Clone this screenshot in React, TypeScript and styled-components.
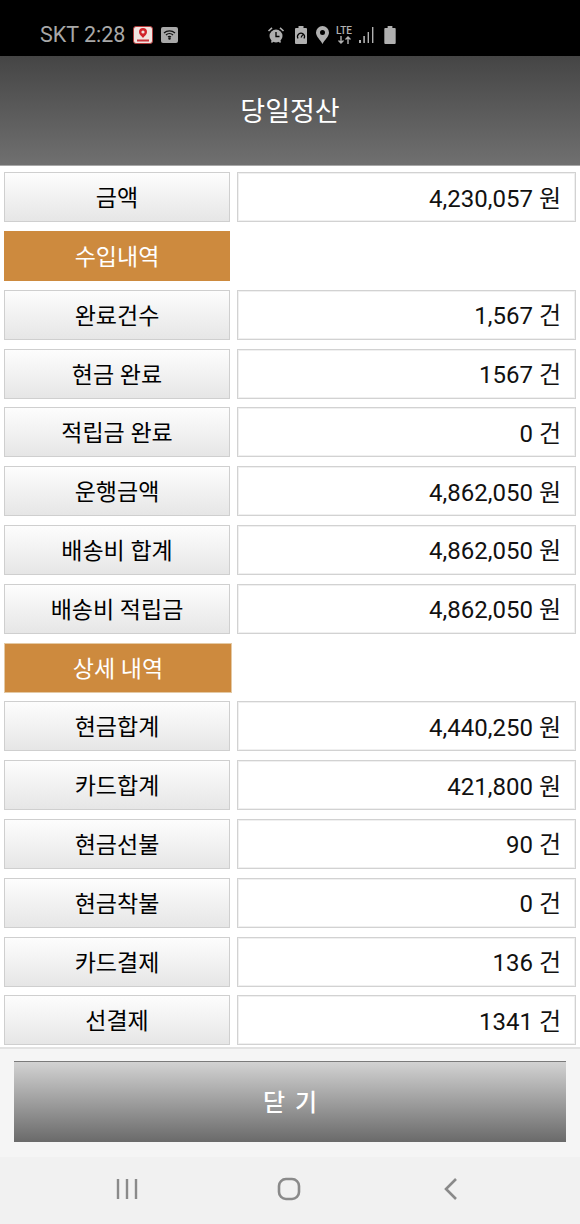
import styled, { createGlobalStyle } from "styled-components";

const GlobalStyle = createGlobalStyle`
  html, body {
    margin: 0;
    padding: 0;
    background: #fff;
  }
  body {
    font-family: "Roboto", "Noto Sans CJK KR", sans-serif;
  }
`;

const Screen = styled.div`
  width: 580px;
  height: 1224px;
  display: flex;
  flex-direction: column;
  overflow: hidden;
`;

const StatusBar = styled.div`
  height: 56px;
  flex: none;
  box-sizing: border-box;
  background: #000;
  display: flex;
  align-items: center;
  padding: 13px 0 0 40px;
  color: #a8a8a8;
  font-size: 21.5px;
`;

const StatusLeft = styled.div`
  display: flex;
  align-items: center;
  width: 227px;
  flex: none;
`;

const Carrier = styled.span`
  margin-right: 8px;
  font-family: "Roboto", sans-serif;
`;

const AppBadge = styled.div`
  width: 20px;
  height: 18px;
  background: #f1e4e0;
  border-radius: 3px;
  border: 1px solid #b03a3a;
  box-sizing: border-box;
  display: flex;
  justify-content: center;
  margin-right: 8px;
`;

const WifiBadge = styled.div`
  width: 17px;
  height: 16px;
  background: #a9a9a9;
  border-radius: 2px;
  display: flex;
  align-items: center;
  justify-content: center;
`;

const StatusIcons = styled.div`
  display: flex;
  align-items: center;
  gap: 9.5px;
`;

const LteBlock = styled.div`
  display: flex;
  flex-direction: column;
  align-items: center;
  width: 17px;
  font-size: 10px;
  font-weight: 500;
  line-height: 10px;
  color: #b0b0b0;
  font-family: "Roboto", sans-serif;
  margin: 0 -3px;
`;

const TitleBar = styled.div`
  height: 110px;
  flex: none;
  box-sizing: border-box;
  background: linear-gradient(#454545, #707070);
  border-bottom: 1px solid #a8a8a8;
  color: #fff;
  display: flex;
  align-items: center;
  justify-content: center;
  font-size: 27px;
  padding-bottom: 2px;
`;

const List = styled.div`
  flex: 1;
  display: flex;
  flex-direction: column;
  gap: 8.8px;
  padding: 6.15px 4px 0;
  background: #fff;
`;

const Row = styled.div`
  display: grid;
  grid-template-columns: 226px 339px;
  column-gap: 7px;
  height: 50px;
`;

const CellText = styled.span`
  transform: translateY(-1px);
`;

const LabelCell = styled.div`
  box-sizing: border-box;
  border: 1px solid #cfcfcf;
  background: linear-gradient(#fdfdfd, #e6e6e6);
  color: #000;
  display: flex;
  align-items: center;
  justify-content: center;
  font-size: 23px;
`;

const SectionCell = styled.div<{ $wide?: boolean }>`
  box-sizing: border-box;
  width: ${(p) => (p.$wide ? "228px" : "226px")};
  background: #cd8a3e;
  border: ${(p) => (p.$wide ? "1px solid #e4c9a4" : "none")};
  color: #fff;
  display: flex;
  align-items: center;
  justify-content: center;
  font-size: 23px;
`;

const ValueCell = styled.div`
  box-sizing: border-box;
  border: 1px solid #d2d2d2;
  box-shadow: inset 0 0 0 1px #f0f0f0;
  background: #fff;
  color: #111;
  display: flex;
  align-items: center;
  justify-content: flex-end;
  padding-right: 14px;
  font-size: 24px;
`;

const Footer = styled.div`
  height: 110px;
  flex: none;
  box-sizing: border-box;
  background: #f5f5f5;
  border-top: 2px solid #e2e2e2;
  padding: 12px 14px 15px;
`;

const CloseButton = styled.div`
  height: 100%;
  box-sizing: border-box;
  border-top: 1px solid #7a7a7a;
  background: linear-gradient(#d2d2d2, #6a6a6a);
  color: #fff;
  display: flex;
  align-items: center;
  justify-content: center;
  font-size: 24px;
  font-weight: 500;
  word-spacing: 4px;
  padding-bottom: 3px;
`;

const NavBar = styled.div`
  height: 67px;
  flex: none;
  box-sizing: border-box;
  background: #f1f1f1;
  display: grid;
  grid-template-columns: repeat(3, 162px);
  align-items: center;
  justify-items: center;
  padding: 0 46px 4px;
`;

type RowData =
  | { kind: "section"; label: string; wide?: boolean }
  | { kind: "row"; label: string; value: string };

const rows: RowData[] = [
  { kind: "row", label: "금액", value: "4,230,057 원" },
  { kind: "section", label: "수입내역" },
  { kind: "row", label: "완료건수", value: "1,567 건" },
  { kind: "row", label: "현금 완료", value: "1567 건" },
  { kind: "row", label: "적립금 완료", value: "0 건" },
  { kind: "row", label: "운행금액", value: "4,862,050 원" },
  { kind: "row", label: "배송비 합계", value: "4,862,050 원" },
  { kind: "row", label: "배송비 적립금", value: "4,862,050 원" },
  { kind: "section", label: "상세 내역", wide: true },
  { kind: "row", label: "현금합계", value: "4,440,250 원" },
  { kind: "row", label: "카드합계", value: "421,800 원" },
  { kind: "row", label: "현금선불", value: "90 건" },
  { kind: "row", label: "현금착불", value: "0 건" },
  { kind: "row", label: "카드결제", value: "136 건" },
  { kind: "row", label: "선결제", value: "1341 건" },
];

const grey = "#b0b0b0";

export default function App() {
  return (
    <Screen>
      <GlobalStyle />
      <StatusBar>
        <StatusLeft>
          <Carrier>SKT 2:28</Carrier>
          <AppBadge>
            <svg width="16" height="16" viewBox="0 0 16 16">
              <path d="M8 1a4 4 0 0 0-4 4c0 2.500 2.500 4 4 6 1.500-2 4-3.500 4-6a4 4 0 0 0-4-4z" fill="#d2232a" />
              <circle cx="8" cy="5" r="1.600" fill="#f1e4e0" />
              <rect x="2" y="12.500" width="12" height="2" fill="#c8323a" />
            </svg>
          </AppBadge>
          <WifiBadge>
            <svg width="13" height="11" viewBox="0 0 13 11" fill="none" stroke="#111" strokeWidth="1.300">
              <path d="M1 4a8 8 0 0 1 11 0" />
              <path d="M3 6a5 5 0 0 1 7 0" />
              <path d="M5 8a2.300 2.300 0 0 1 3 0" />
              <circle cx="6.500" cy="9.600" r=".6" fill="#111" />
            </svg>
          </WifiBadge>
        </StatusLeft>
        <StatusIcons>
          <svg width="18" height="18" viewBox="0 0 18 18">
            <circle cx="9" cy="10" r="6.500" fill={grey} />
            <path d="M1.500 5 5 1.800M16.500 5 13 1.800M4.500 16.500l1.500-2M13.500 16.500l-1.500-2" stroke={grey} strokeWidth="1.600" fill="none" />
            <path d="M9 6v4.500h3.500" stroke="#000" strokeWidth="1.300" fill="none" />
          </svg>
          <svg width="12" height="18" viewBox="0 0 12 18">
            <path d="M3.500 0h5v2H11a1 1 0 0 1 1 1v14a1 1 0 0 1-1 1H1a1 1 0 0 1-1-1V3a1 1 0 0 1 1-1h2.500z" fill={grey} />
            <path d="M3 12.500a3.500 3.500 0 1 1 6 0" stroke="#000" strokeWidth="1.200" fill="none" />
            <path d="M6 11.500l1.800-3" stroke="#000" strokeWidth="1.200" />
          </svg>
          <svg width="13" height="18" viewBox="0 0 13 18">
            <path fillRule="evenodd" d="M6.500 0A6.500 6.500 0 0 0 0 6.500C0 10.700 4.500 14 6.500 18c2-4 6.500-7.300 6.500-11.500A6.500 6.500 0 0 0 6.500 0zm0 4a2.500 2.500 0 1 1 0 5 2.500 2.500 0 0 1 0-5z" fill={grey} />
          </svg>
          <LteBlock>
            LTE
            <svg width="15" height="8" viewBox="0 0 15 8" fill="none" stroke={grey} strokeWidth="1.400">
              <path d="M4 0v7M1.500 4.500 4 7l2.500-2.500M11 8V1M8.500 3.500 11 1l2.500 2.500" />
            </svg>
          </LteBlock>
          <svg width="15" height="18" viewBox="0 0 15 18" fill={grey}>
            <rect x="0" y="14" width="2" height="3" />
            <rect x="4.300" y="10" width="1.600" height="7" />
            <rect x="8.600" y="6" width="1.400" height="11" />
            <rect x="13" y="1" width="1.400" height="16" />
          </svg>
          <svg width="12" height="18" viewBox="0 0 12 19">
            <path d="M3.500 0h5v2H11a1 1 0 0 1 1 1v15a1 1 0 0 1-1 1H1a1 1 0 0 1-1-1V3a1 1 0 0 1 1-1h2.500z" fill={grey} />
          </svg>
        </StatusIcons>
      </StatusBar>
      <TitleBar>당일정산</TitleBar>
      <List>
        {rows.map((row) =>
          row.kind === "section" ? (
            <Row key={row.label}>
              <SectionCell $wide={row.wide}>
                <CellText>{row.label}</CellText>
              </SectionCell>
            </Row>
          ) : (
            <Row key={row.label}>
              <LabelCell>
                <CellText>{row.label}</CellText>
              </LabelCell>
              <ValueCell>
                <CellText>{row.value}</CellText>
              </ValueCell>
            </Row>
          )
        )}
      </List>
      <Footer>
        <CloseButton>닫 기</CloseButton>
      </Footer>
      <NavBar>
        <svg width="22" height="22" viewBox="0 0 22 22" stroke="#8a8a8a" strokeWidth="2.400">
          <path d="M2 1v20M11 1v20M20 1v20" />
        </svg>
        <svg width="24" height="24" viewBox="0 0 24 24" fill="none" stroke="#8a8a8a" strokeWidth="2.600">
          <rect x="2" y="2" width="20" height="20" rx="7" />
        </svg>
        <svg width="14" height="24" viewBox="0 0 14 24" fill="none" stroke="#8a8a8a" strokeWidth="2.600">
          <path d="M12 2 2 12l10 10" />
        </svg>
      </NavBar>
    </Screen>
  );
}
